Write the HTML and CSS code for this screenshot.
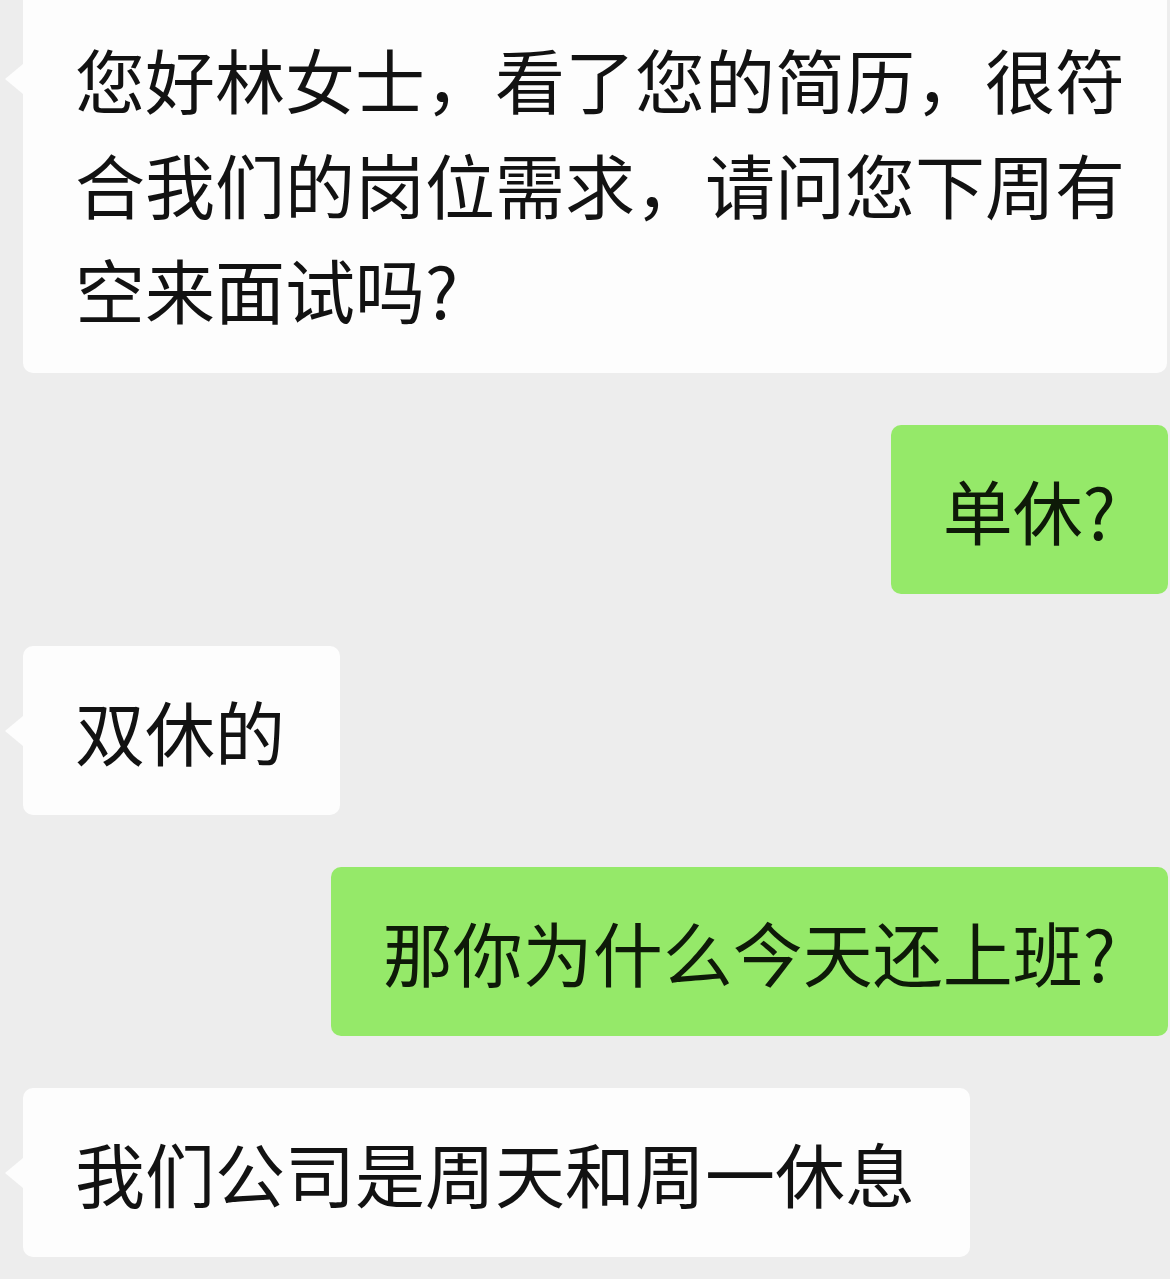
FILE: index.html
```html
<!DOCTYPE html>
<html lang="zh-CN">
<head>
<meta charset="utf-8">
<title>聊天记录</title>
<link rel="stylesheet" href="styles.css">
</head>
<body>
<div class="chat">
  <div class="row row-in">
    <div class="bubble bubble-in bubble-first">您好林女士，看了您的简历，很符合我们的岗位需求，请问您下周有空来面试吗?</div>
  </div>
  <div class="row row-out">
    <div class="bubble bubble-out">单休?</div>
  </div>
  <div class="row row-in">
    <div class="bubble bubble-in">双休的</div>
  </div>
  <div class="row row-out">
    <div class="bubble bubble-out">那你为什么今天还上班?</div>
  </div>
  <div class="row row-in">
    <div class="bubble bubble-in">我们公司是周天和周一休息</div>
  </div>
</div>
</body>
</html>
```

FILE: styles.css
```css
html, body {
  margin: 0;
  padding: 0;
  background: #ededed;
}

body {
  width: 1170px;
  height: 1279px;
  overflow: hidden;
  font-family: "Noto Sans CJK SC", "Noto Sans", sans-serif;
}

.chat {
  display: flex;
  flex-direction: column;
  gap: 52px;
  padding: 0 2px 0 23px;
}

.row {
  display: flex;
}

.row-out {
  justify-content: flex-end;
}

.bubble {
  position: relative;
  font-size: 70px;
  line-height: 105px;
  font-weight: 400;
  border-radius: 10px;
  padding: 32px 55px 32px 52px;
}

.bubble-in {
  background: #fdfdfd;
  color: #121212;
}

.bubble-in::before {
  content: "";
  position: absolute;
  left: -18px;
  top: 70px;
  border-style: solid;
  border-width: 15px 18px 15px 0;
  border-color: transparent #fdfdfd transparent transparent;
}

.bubble-first {
  margin-top: -6px;
  margin-right: 1px;
  flex: 1;
  padding-right: 30px;
  border-top-left-radius: 0;
  border-top-right-radius: 0;
}

.bubble-out {
  background: #95e969;
  color: #0e1a08;
  padding-left: 52px;
  padding-right: 52px;
}
```
